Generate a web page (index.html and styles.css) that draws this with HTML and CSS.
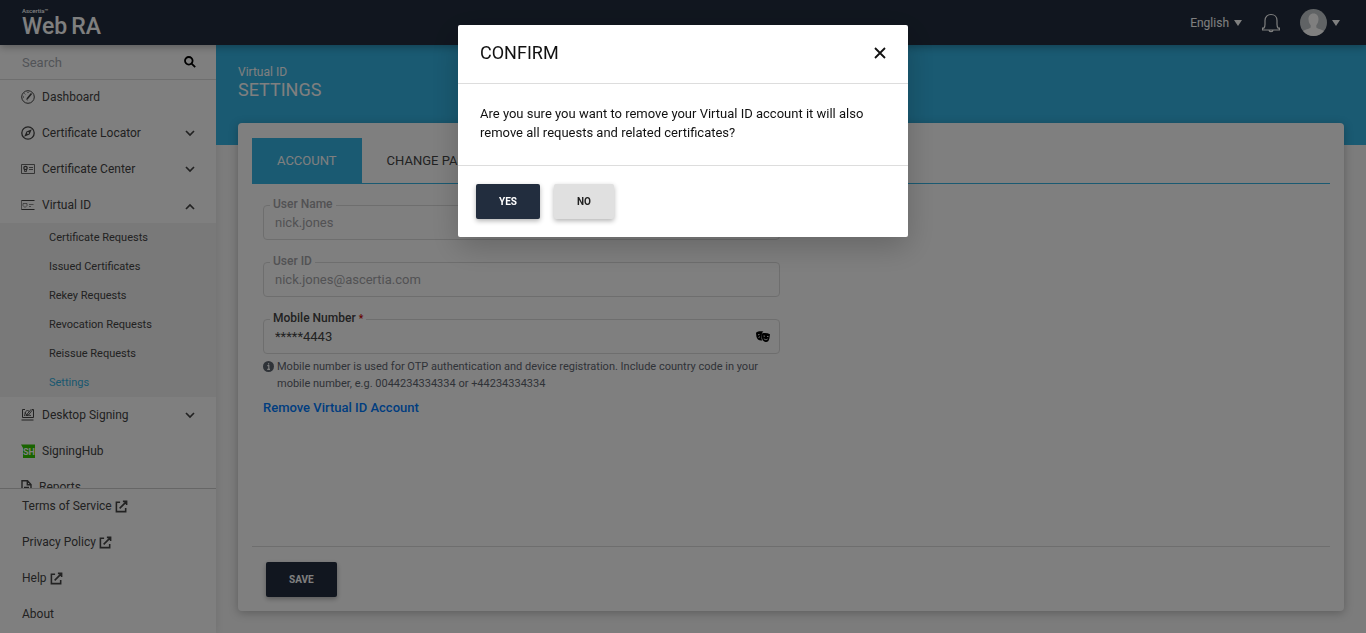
FILE: index.html
```html
<!DOCTYPE html>
<html lang="en">
<head>
  <meta charset="UTF-8" />
  <meta name="viewport" content="width=device-width, initial-scale=1" />
  <title>Web RA - Settings</title>
  <link rel="stylesheet" href="styles.css">
</head>
<body>

  <svg class="defs" width="0" height="0">
    <symbol id="chevron" viewBox="0 0 12 12"><path d="M2 4l4 4 4-4" fill="none" stroke="currentColor" stroke-width="1.7"/></symbol>
    <symbol id="external" viewBox="0 0 14 14"><path d="M5.5 2.5H1.5v10h10v-4M5 9l7-7M8.5 1.5h4v4" fill="none" stroke="currentColor" stroke-width="1.7"/></symbol>
  </svg>

  <header class="topbar">
    <a class="logo" href="#">
      <span class="logo-small">Ascertia™</span>
      <span class="logo-big">Web<span>RA</span></span>
    </a>
    <div class="topbar-right">
      <button class="top-btn" type="button">English <i class="caret"></i></button>
      <button class="top-btn bell" type="button" aria-label="Notifications">
        <svg width="20" height="20" viewBox="0 0 20 20" fill="none" stroke="currentColor" stroke-width="1.2">
          <path d="M1.600 15.200h1.200c.9-.8 1.200-2.200 1.200-4V7.500C4 3.900 6.500 1.500 10 1.500s6 2.400 6 6v3.700c0 1.800.3 3.200 1.200 4h1.200V17H1.600zM8 17c0 2.200 4 2.200 4 0"/>
        </svg>
      </button>
      <button class="top-btn" type="button" aria-label="Profile">
        <svg width="27" height="27" viewBox="0 0 27 27">
          <defs><clipPath id="face"><circle cx="13.500" cy="13.500" r="13.500"/></clipPath></defs>
          <g clip-path="url(#face)">
            <rect width="27" height="27" fill="#c0c6ca"/>
            <path d="M13.500 4.500c-3.400 0-5 2.500-5 5.500 0 2.800 1 5 2.200 6.200v2.300c-1.500 1.600-6.200 1.800-8.200 4V28h22v-5.500c-2-2.200-6.700-2.400-8.200-4v-2.300c1.200-1.200 2.200-3.400 2.200-6.200 0-3-1.600-5.500-5-5.500z" fill="#fff"/>
          </g>
        </svg>
        <i class="caret"></i>
      </button>
    </div>
  </header>

  <div class="layout">
    <aside class="sidebar">
      <form class="search">
        <input type="text" placeholder="Search" aria-label="Search">
        <button type="submit" aria-label="Search">
          <svg width="12" height="12" viewBox="0 0 12 12" fill="none" stroke="#000" stroke-width="1.800"><circle cx="4.800" cy="4.800" r="3.800"/><path d="M7.600 7.600l3.600 3.600"/></svg>
        </button>
      </form>

      <nav class="menu">
        <a href="#">
          <svg class="icon" viewBox="0 0 14 14" fill="none" stroke="currentColor"><circle cx="7" cy="7" r="6.300"/><path d="M6 9l4.500-5.500" stroke-width="1.600"/><path d="M2 7h1M7 2v1M3.500 3.500l.8.800M5.500 9.500l1 .5" /></svg>
          Dashboard
        </a>
        <a href="#">
          <svg class="icon" viewBox="0 0 14 14"><circle cx="7" cy="7" r="6.200" fill="none" stroke="currentColor" stroke-width="1.300"/><path d="M10.800 3.200L8.500 8.500l-5.300 2.300L5.500 5.500z" fill="currentColor"/><circle cx="7" cy="7" r="1" fill="#fff"/></svg>
          Certificate Locator
          <svg class="arrow"><use href="#chevron"/></svg>
        </a>
        <a href="#">
          <svg class="icon" viewBox="0 0 14 14" fill="none" stroke="currentColor" stroke-width=".8"><path d="M.5 2.500h13v9H.5z"/><circle cx="4.500" cy="6" r="1.700" stroke-width="1.200"/><path d="M3.500 7.500v2h2v-2M8 5.500h4M8 7.500h4"/></svg>
          Certificate Center
          <svg class="arrow"><use href="#chevron"/></svg>
        </a>
        <a href="#">
          <svg class="icon" viewBox="0 0 14 14" fill="none" stroke="currentColor" stroke-width=".6"><path d="M.5 2.500h13M.5 11.500h13" stroke-width="1.200"/><path d="M.5 2.500v9M2 5.500h4v2l-2 2-2-2zM8 6.500h4.500M8 8.500h2"/></svg>
          Virtual ID
          <svg class="arrow" viewBox="0 0 12 12"><path d="M2 10l4-4 4 4" fill="none" stroke="currentColor" stroke-width="1.7"/></svg>
        </a>
        <div class="submenu">
          <a href="#">Certificate Requests</a>
          <a href="#">Issued Certificates</a>
          <a href="#">Rekey Requests</a>
          <a href="#">Revocation Requests</a>
          <a href="#">Reissue Requests</a>
          <a href="#" class="active">Settings</a>
        </div>
        <a href="#">
          <svg class="icon" viewBox="0 0 14 14" fill="none" stroke="currentColor"><path d="M4 1.500H1.500v8h11v-8H11M.5 12h12" /><path d="M3.500 8l1-4c1-2 3-2 4 0M5 7.500l5-6 1 1-4 5zM4 4.500c0 2 4 3 6 3" stroke-width=".9"/></svg>
          Desktop Signing
          <svg class="arrow"><use href="#chevron"/></svg>
        </a>
        <a href="#">
          <svg class="icon" viewBox="0 0 14 14"><path d="M0 .5h14V14H2V4z" fill="#32c800"/><text class="sh" x="2" y="11">SH</text></svg>
          SigningHub
        </a>
        <a href="#" class="tight">
          <svg class="icon" width="11" viewBox="0 0 11 14" fill="none" stroke="currentColor" stroke-width="1.400"><path d="M1 .8h5.500L10 4.500v8.700H1zM6.300 1v3.700H10M3 7.500h5M3 10h5"/></svg>
          Reports
        </a>
      </nav>

      <footer class="side-footer">
        <a href="#">Terms of Service <svg width="13" height="13"><use href="#external"/></svg></a>
        <a href="#">Privacy Policy <svg width="13" height="13"><use href="#external"/></svg></a>
        <a href="#">Help <svg width="13" height="13"><use href="#external"/></svg></a>
        <a href="#">About</a>
      </footer>
    </aside>

    <main class="main">
      <div class="banner">
        <span>Virtual ID</span>
        <h1>SETTINGS</h1>
      </div>

      <form class="card">
        <div class="tabs">
          <button type="button" class="tab active">ACCOUNT</button>
          <button type="button" class="tab">CHANGE PASSWORD</button>
        </div>

        <div class="pane">
          <div class="field disabled">
            <label for="username">User Name</label>
            <input type="text" id="username" value="nick.jones" disabled>
          </div>
          <div class="field disabled">
            <label for="userid">User ID</label>
            <input type="text" id="userid" value="nick.jones@ascertia.com" disabled>
          </div>
          <div class="field">
            <label for="mobile">Mobile Number <b>*</b></label>
            <input type="text" id="mobile" value="*****4443">
            <svg class="mask" width="14" height="12" viewBox="0 0 14 12">
              <path d="M0 1.800C2 .3 5 0 7.500.8L6 1.800 5.500 8l.8 1.500C3 10 .8 8 .4 5.500z" fill="#000"/>
              <path d="M6 2.500c2.500-.8 5.500-.5 8 .7l-.6 4.300c-.5 2.500-2 3.700-3.700 3.500C7.500 10.700 6 9 6 6.500z" fill="#000"/>
              <path d="M7.500 5l1.500.2M11 5.400l1.500.2M7.800 7.500c1 1.400 2.600 1.500 3.800.5M2 3.800l1.500-.3M2.500 6.500l1.500-.8" stroke="#fff" stroke-width=".9" fill="none"/>
            </svg>
          </div>
          <p class="hint">
            <svg width="11" height="11" viewBox="0 0 11 11"><circle cx="5.500" cy="5.500" r="5.500" fill="currentColor"/><path d="M4.300 4.700h1.500v3.500M4.200 8.300h2.800M5 2.800h1.200" stroke="#fff" stroke-width="1.200" fill="none"/></svg>
            <span>Mobile number is used for OTP authentication and device registration. Include country code in your mobile number, e.g. 0044234334334 or +44234334334</span>
          </p>
          <a class="remove" href="#">Remove Virtual ID Account</a>
        </div>

        <div class="card-footer">
          <button type="button" class="btn primary">SAVE</button>
        </div>
      </form>
    </main>
  </div>

  <div class="overlay">
    <div class="modal" role="dialog" aria-modal="true" aria-labelledby="confirmTitle">
      <div class="modal-header">
        <h2 id="confirmTitle">CONFIRM</h2>
        <button type="button" class="close" aria-label="Close">
          <svg width="12" height="12" viewBox="0 0 12 12" stroke="#111" stroke-width="1.800"><path d="M1 1l10 10M11 1L1 11"/></svg>
        </button>
      </div>
      <p class="modal-body">Are you sure you want to remove your Virtual ID account it will also remove all requests and related certificates?</p>
      <div class="modal-footer">
        <button type="button" class="btn primary">YES</button>
        <button type="button" class="btn">NO</button>
      </div>
    </div>
  </div>

</body>
</html>
```
FILE: styles.css
```css
* {
  box-sizing: border-box;
}
body {
  margin: 0;
  height: 100vh;
  display: flex;
  flex-direction: column;
  overflow: hidden;
  font-family: Roboto, "Liberation Sans", sans-serif;
  font-size: 13px;
  color: #444;
  background-color: #f8f8f8;
}
h1, h2, p {
  margin: 0;
  font-weight: 400;
}
a {
  color: inherit;
  text-decoration: none;
}
button, input {
  font-family: inherit;
  font-size: 13px;
  color: inherit;
  border: 0;
  padding: 0;
  background: none;
}
svg {
  display: block;
  flex: none;
}
.defs {
  position: absolute;
}

/* top bar */
.topbar {
  display: flex;
  justify-content: space-between;
  align-items: center;
  height: 45px;
  flex: none;
  padding: 0 26px 0 22px;
  background-color: #222d3e;
  color: #fff;
  box-shadow: 0 2px 8px rgba(0,0,0,0.3);
  z-index: 2;
}
.logo {
  display: flex;
  flex-direction: column;
}
.logo-small {
  font-size: 6px;
  font-weight: 500;
  line-height: 8px;
}
.logo-big {
  display: flex;
  gap: 4px;
  font-size: 23px;
  font-weight: 500;
  line-height: 23px;
}
.topbar-right {
  display: flex;
  align-items: center;
  gap: 19px;
}
.top-btn {
  display: flex;
  align-items: center;
  gap: 5px;
  font-size: 12px;
}
.caret {
  border: 4px solid transparent;
  border-top: 6px solid #fff;
  border-bottom: 0;
}

/* sidebar */
.layout {
  display: flex;
  flex: 1;
  min-height: 0;
}
.sidebar {
  display: flex;
  flex-direction: column;
  width: 216px;
  flex: none;
  background-color: #fff;
  box-shadow: 0 0 8px rgba(0,0,0,0.1);
}
.search {
  display: flex;
  align-items: center;
  height: 35px;
  flex: none;
  padding: 0 20px 0 22px;
  border-bottom: 1px solid #ddd;
}
.search input {
  flex: 1;
  min-width: 0;
}
.search input::placeholder {
  color: #a4a8b0;
}
.menu {
  flex: 1;
  min-height: 0;
  margin-top: -1px;
  overflow: hidden;
}
.menu > a {
  display: flex;
  align-items: center;
  gap: 7px;
  height: 36px;
  padding: 0 20px 0 21px;
  font-size: 12px;
}
.icon {
  height: 14px;
}
.icon:not([width]) {
  width: 14px;
}
.sh {
  font-size: 9px;
  font-weight: 700;
  fill: #fff;
}
.arrow {
  width: 12px;
  height: 12px;
  margin-left: auto;
}
.submenu {
  padding-left: 49px;
  background-color: #f2f2f2;
  font-size: 11px;
  line-height: 29px;
}
.submenu a {
  display: block;
}
.submenu .active {
  color: #33b1e1;
}
.side-footer {
  border-top: 1px solid #ccc;
  padding-left: 22px;
  font-size: 12px;
}
.side-footer a {
  display: flex;
  align-items: center;
  gap: 3px;
  height: 36px;
  padding-bottom: 2px;
}

/* page content */
.main {
  display: flex;
  flex-direction: column;
  flex: 1;
  min-width: 0;
}
.banner {
  height: 100px;
  flex: none;
  padding: 20px 22px;
  background-color: #34b4e4;
  color: #fff;
  font-size: 12px;
  line-height: 15px;
}
.banner h1 {
  font-size: 18px;
  line-height: 20px;
}
.card {
  display: flex;
  flex-direction: column;
  flex: 1;
  margin: -22px 22px 22px;
  padding: 15px 14px 14px;
  border-radius: 4px;
  background-color: #fff;
  box-shadow: 0 2px 10px rgba(0,0,0,0.25);
}
.tabs {
  display: flex;
  border-bottom: 1px solid #34b4e4;
}
.tab {
  height: 45px;
  padding: 0 25px;
}
.tab.active {
  background-color: #34b4e4;
  color: #fff;
}
.pane {
  flex: 1;
  padding: 21px 11px 0;
}
.field {
  position: relative;
  width: 49%;
  margin-bottom: 22px;
}
.field label {
  position: absolute;
  top: -8px;
  left: 7px;
  padding: 0 3px;
  background-color: #fff;
  font-size: 12px;
  font-weight: 500;
  line-height: 14px;
}
.field label b {
  font-size: 10px;
  color: #c00;
}
.field input {
  display: block;
  width: 100%;
  height: 35px;
  padding: 0 11px;
  border: 1px solid #ddd;
  border-radius: 4px;
}
.field.disabled, .field.disabled input {
  color: #a4a4a8;
}
.mask {
  position: absolute;
  top: 12px;
  right: 10px;
}
.hint {
  display: flex;
  gap: 3px;
  width: 49%;
  margin-top: -18px;
  padding-right: 20px;
  font-size: 11px;
  line-height: 17px;
  color: #5f6670;
}
.hint svg {
  margin-top: 3px;
}
.remove {
  display: inline-block;
  margin-top: 8px;
  font-weight: 500;
  line-height: 16px;
  color: #007bff;
}
.card-footer {
  padding: 15px 14px 0;
  border-top: 1px solid #ddd;
}
.btn {
  height: 35px;
  padding: 0 23px;
  border-radius: 2px;
  background-color: #e0e0e0;
  color: #222;
  font-size: 10px;
  font-weight: 700;
  box-shadow: 0 2px 5px rgba(0,0,0,0.3);
}
.btn.primary {
  background-color: #222d3e;
  color: #fff;
}

/* confirm dialog */
.overlay {
  position: fixed;
  inset: 0;
  z-index: 10;
  display: flex;
  justify-content: center;
  align-items: flex-start;
  padding-top: 25px;
  background-color: rgba(0,0,0,0.5);
}
.modal {
  width: 450px;
  border-radius: 2px;
  background-color: #fff;
  color: #111;
  box-shadow: 0 10px 30px rgba(0,0,0,0.2);
}
.modal-header {
  display: flex;
  justify-content: space-between;
  align-items: center;
  height: 59px;
  padding: 0 22px 3px;
  border-bottom: 1px solid #ddd;
}
.modal-header h2 {
  font-size: 18px;
}
.modal-body {
  padding: 20px 22px 23px;
  line-height: 19px;
}
.modal-footer {
  display: flex;
  gap: 14px;
  padding: 18px;
  border-top: 1px solid #ddd;
}
```
